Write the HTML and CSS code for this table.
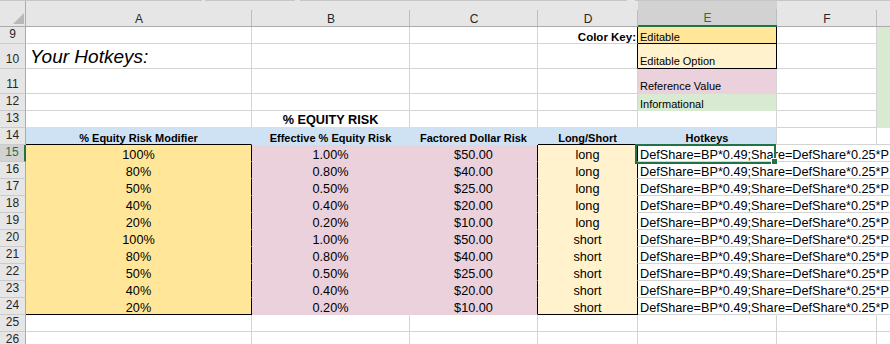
FILE: index.html
```html
<!DOCTYPE html>
<html lang="en">
<head>
    <meta charset="UTF-8">
    <meta name="viewport" content="width=device-width, initial-scale=1.0">
    <title>Hotkeys</title>
    <link rel="stylesheet" href="styles.css">
</head>
<body>
    <div class="topline">
        <span class="seg s1"></span>
        <span class="seg s2"></span>
        <span class="seg s3"></span>
        <span class="seg s4"></span>
    </div>

    <table class="sheet">
        <colgroup>
            <col class="w-rh">
            <col class="w-a">
            <col class="w-b">
            <col class="w-c">
            <col class="w-d">
            <col class="w-e">
            <col class="w-f">
            <col class="w-g">
        </colgroup>
        <thead>
            <tr class="colhead">
                <th class="corner">
                    <svg width="26" height="25" viewBox="0 0 26 25"><polygon points="24,12 24,23 13,23" fill="#b8b8b8"/></svg>
                </th>
                <th>A</th>
                <th>B</th>
                <th>C</th>
                <th>D</th>
                <th class="cur">E</th>
                <th>F</th>
                <th></th>
            </tr>
        </thead>
        <tbody>
            <tr class="h17">
                <td class="rh">9</td>
                <td></td>
                <td></td>
                <td></td>
                <td class="key br-k">Color Key:</td>
                <td class="kv yl br-k bb-k">Editable</td>
                <td></td>
                <td class="gr nb"></td>
            </tr>
            <tr class="h25">
                <td class="rh">10</td>
                <td class="hot">Your Hotkeys:</td>
                <td></td>
                <td></td>
                <td class="br-k"></td>
                <td class="kv tall ly br-k bb-k">Editable Option</td>
                <td></td>
                <td class="gr nb"></td>
            </tr>
            <tr class="h25">
                <td class="rh">11</td>
                <td></td>
                <td></td>
                <td></td>
                <td></td>
                <td class="kv tall pk nb">Reference Value</td>
                <td></td>
                <td class="gr nb"></td>
            </tr>
            <tr class="h17">
                <td class="rh">12</td>
                <td></td>
                <td></td>
                <td></td>
                <td></td>
                <td class="kv gr nb">Informational</td>
                <td></td>
                <td class="gr nb"></td>
            </tr>
            <tr class="h17">
                <td class="rh">13</td>
                <td class="bb-bl"></td>
                <td class="title c bb-bl">% EQUITY RISK</td>
                <td class="bb-bl"></td>
                <td class="bb-bl"></td>
                <td class="bb-bl"></td>
                <td></td>
                <td class="gr nb"></td>
            </tr>
            <tr class="h17">
                <td class="rh">14</td>
                <td class="colhd bl nr bb-k">% Equity Risk Modifier</td>
                <td class="colhd bl nr nb">Effective % Equity Risk</td>
                <td class="colhd bl nr nb">Factored Dollar Risk</td>
                <td class="colhd bl nr bb-k">Long/Short</td>
                <td class="colhd bl">Hotkeys</td>
                <td></td>
                <td></td>
            </tr>
            <tr class="h17">
                <td class="rh cur">15</td>
                <td class="c yl br-k nb">100%</td>
                <td class="c pk nr nb">1.00%</td>
                <td class="c pk br-k nb">$50.00</td>
                <td class="c ly br-k nb">long</td>
                <td class="hk nr sel">DefShare=BP*0.49;Share=DefShare*0.25*P</td>
                <td class="nr"></td>
                <td></td>
            </tr>
            <tr class="h17">
                <td class="rh">16</td>
                <td class="c yl br-k nb">80%</td>
                <td class="c pk nr nb">0.80%</td>
                <td class="c pk br-k nb">$40.00</td>
                <td class="c ly br-k nb">long</td>
                <td class="hk nr">DefShare=BP*0.49;Share=DefShare*0.25*P</td>
                <td class="nr"></td>
                <td></td>
            </tr>
            <tr class="h17">
                <td class="rh">17</td>
                <td class="c yl br-k nb">50%</td>
                <td class="c pk nr nb">0.50%</td>
                <td class="c pk br-k nb">$25.00</td>
                <td class="c ly br-k nb">long</td>
                <td class="hk nr">DefShare=BP*0.49;Share=DefShare*0.25*P</td>
                <td class="nr"></td>
                <td></td>
            </tr>
            <tr class="h17">
                <td class="rh">18</td>
                <td class="c yl br-k nb">40%</td>
                <td class="c pk nr nb">0.40%</td>
                <td class="c pk br-k nb">$20.00</td>
                <td class="c ly br-k nb">long</td>
                <td class="hk nr">DefShare=BP*0.49;Share=DefShare*0.25*P</td>
                <td class="nr"></td>
                <td></td>
            </tr>
            <tr class="h17">
                <td class="rh">19</td>
                <td class="c yl br-k nb">20%</td>
                <td class="c pk nr nb">0.20%</td>
                <td class="c pk br-k nb">$10.00</td>
                <td class="c ly br-k nb">long</td>
                <td class="hk nr">DefShare=BP*0.49;Share=DefShare*0.25*P</td>
                <td class="nr"></td>
                <td></td>
            </tr>
            <tr class="h17">
                <td class="rh">20</td>
                <td class="c yl br-k nb">100%</td>
                <td class="c pk nr nb">1.00%</td>
                <td class="c pk br-k nb">$50.00</td>
                <td class="c ly br-k nb">short</td>
                <td class="hk nr">DefShare=BP*0.49;Share=DefShare*0.25*P</td>
                <td class="nr"></td>
                <td></td>
            </tr>
            <tr class="h17">
                <td class="rh">21</td>
                <td class="c yl br-k nb">80%</td>
                <td class="c pk nr nb">0.80%</td>
                <td class="c pk br-k nb">$40.00</td>
                <td class="c ly br-k nb">short</td>
                <td class="hk nr">DefShare=BP*0.49;Share=DefShare*0.25*P</td>
                <td class="nr"></td>
                <td></td>
            </tr>
            <tr class="h17">
                <td class="rh">22</td>
                <td class="c yl br-k nb">50%</td>
                <td class="c pk nr nb">0.50%</td>
                <td class="c pk br-k nb">$25.00</td>
                <td class="c ly br-k nb">short</td>
                <td class="hk nr">DefShare=BP*0.49;Share=DefShare*0.25*P</td>
                <td class="nr"></td>
                <td></td>
            </tr>
            <tr class="h17">
                <td class="rh">23</td>
                <td class="c yl br-k nb">40%</td>
                <td class="c pk nr nb">0.40%</td>
                <td class="c pk br-k nb">$20.00</td>
                <td class="c ly br-k nb">short</td>
                <td class="hk nr">DefShare=BP*0.49;Share=DefShare*0.25*P</td>
                <td class="nr"></td>
                <td></td>
            </tr>
            <tr class="h17">
                <td class="rh">24</td>
                <td class="c yl br-k bb-k">20%</td>
                <td class="c pk nr nb">0.20%</td>
                <td class="c pk br-k nb">$10.00</td>
                <td class="c ly br-k bb-k">short</td>
                <td class="hk nr">DefShare=BP*0.49;Share=DefShare*0.25*P</td>
                <td class="nr"></td>
                <td></td>
            </tr>
            <tr class="h17">
                <td class="rh">25</td>
                <td></td>
                <td></td>
                <td></td>
                <td></td>
                <td></td>
                <td></td>
                <td></td>
            </tr>
            <tr class="h17">
                <td class="rh">26</td>
                <td></td>
                <td></td>
                <td></td>
                <td></td>
                <td></td>
                <td></td>
                <td></td>
            </tr>
        </tbody>
    </table>
</body>
</html>
```

FILE: styles.css
```css
html, body {
    margin: 0;
    padding: 0;
    background-color: white;
    overflow: hidden;
}
body {
    width: 890px;
    height: 344px;
    font-family: "Liberation Sans", Arial, sans-serif;
    color: #000;
}

/* thin strip above the column letters */
.topline {
    display: flex;
    height: 1px;
    background-color: #e6e6e6;
}
.seg {
    height: 1px;
    background-color: #c6c6c6;
}
.s1 { width: 202px; margin-right: 3px; }
.s2 { width: 90px; margin-right: 5px; }
.s3 { width: 327px; margin-right: 8px; }
.s4 { flex: 1; }

.sheet {
    table-layout: fixed;
    border-collapse: separate;
    border-spacing: 0;
    width: 917px;
}
.w-rh { width: 26px; }
.w-a { width: 226px; }
.w-b { width: 158px; }
.w-c { width: 128px; }
.w-d { width: 100px; }
.w-e { width: 139px; }
.w-f { width: 100px; }
.w-g { width: 40px; }

/* column letters */
.colhead { height: 26px; }
.colhead th {
    padding: 0 0 1px 0;
    font-weight: normal;
    font-size: 12px;
    line-height: 12px;
    color: #262626;
    text-align: center;
    vertical-align: bottom;
    border-bottom: 1px solid #ababab;
    background: #e6e6e6 linear-gradient(#bdbdbd, #bdbdbd) right bottom / 1px 16px no-repeat;
}
.colhead th.corner {
    padding: 0;
    vertical-align: top;
    background: #e6e6e6;
    border-right: 1px solid #ababab;
}
.corner svg {
    display: block;
}
.colhead th.cur {
    background-color: #d2d2d2;
    color: #217346;
    border-bottom: 2px solid #217346;
}

.h17 { height: 17px; }
.h25 { height: 25px; }

/* cells */
td {
    padding: 0 2px;
    font-size: 12.7px;
    line-height: 11px;
    vertical-align: bottom;
    white-space: nowrap;
    overflow: visible;
    border-right: 1px solid #d4d4d4;
    border-bottom: 1px solid #d4d4d4;
}
td.c { text-align: center; }

/* row numbers */
td.rh {
    padding: 0 0 3px 0;
    font-size: 12px;
    text-align: center;
    color: #262626;
    background-color: #e6e6e6;
    border-right: 1px solid #ababab;
    border-bottom-color: #cbcbcb;
}
td.rh.cur {
    background-color: #d2d2d2;
    color: #217346;
    border-right: 2px solid #217346;
}

/* fills */
.yl { background-color: #ffe699; }
.ly { background-color: #fff2cc; }
.pk { background-color: #ead1dc; }
.gr { background-color: #d9ead3; }
.bl { background-color: #cfe2f3; }

/* borders */
.br-k { border-right-color: #000; }
.bb-k { border-bottom-color: #000; }
.nb { border-bottom-color: transparent; }
.nr { border-right-color: transparent; }
.bb-bl { border-bottom-color: #cfe2f3; }

/* text styles */
.hot {
    padding-left: 4px;
    font-size: 19px;
    font-style: italic;
    line-height: 22px;
}
.key {
    padding-right: 1px;
    font-size: 11.5px;
    font-weight: bold;
    line-height: 12.5px;
    text-align: right;
}
.kv {
    font-size: 11px;
    line-height: 12px;
}
.kv.tall { padding-bottom: 1.5px; }
.title {
    font-weight: bold;
    line-height: 13px;
}
.colhd {
    font-size: 11px;
    font-weight: bold;
    line-height: 11px;
    text-align: center;
}
.hk { padding-left: 2px; }

/* active cell */
.sel { position: relative; }
.sel::after {
    content: "";
    position: absolute;
    left: -3px;
    top: -1px;
    right: 0;
    bottom: -3px;
    border: 2px solid #217346;
}
.sel::before {
    content: "";
    position: absolute;
    right: -2px;
    bottom: -4px;
    width: 5px;
    height: 5px;
    background-color: #217346;
    border: 1px solid white;
    z-index: 1;
}
```
